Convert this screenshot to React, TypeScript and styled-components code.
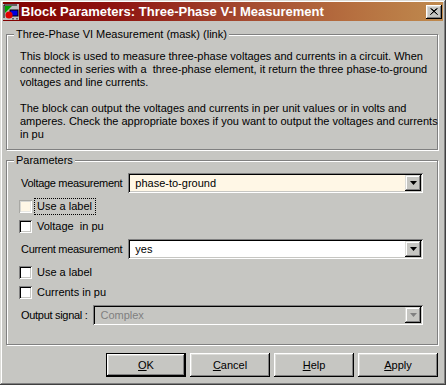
import React from 'react';
import styled, { createGlobalStyle } from 'styled-components';

// Styles

const GlobalStyle = createGlobalStyle`
    html, body {
        margin: 0;
        padding: 0;
        background: #c6c6c2;
    }
    body {
        font-family: "Liberation Sans", Arial, sans-serif;
        font-size: 11px;
        color: #000;
    }
`

const Window = styled.div`
    width: 446px;
    height: 385px;
    box-sizing: border-box;
    padding: 3px;
    background: #c6c6c2;
    box-shadow: inset -1px -1px 0 #404040, inset 1px 1px 0 #dcdcd8,
        inset -2px -2px 0 #808080, inset 2px 2px 0 #ffffff;
    display: flex;
    flex-direction: column;
`
const TitleBar = styled.div`
    height: 19px;
    margin-top: -1px;
    display: flex;
    align-items: center;
    padding-right: 1px;
    background: linear-gradient(to right, #800000 0%, #8e1410 25%, #a44a30 55%, #b67040 80%, #bf8a4e 100%);
`
const TitleText = styled.span`
    flex: 1;
    margin-left: 2px;
    color: #fff;
    font-weight: bold;
    font-size: 13px;
    white-space: nowrap;
`
const CloseButton = styled.div`
    width: 16px;
    height: 14px;
    box-sizing: border-box;
    background: #c6c6c2;
    display: flex;
    align-items: center;
    justify-content: center;
    box-shadow: inset -1px -1px 0 #000, inset 1px 1px 0 #fff,
        inset -2px -2px 0 #808080, inset 2px 2px 0 #dcdcd8;
`
const Body = styled.div`
    flex: 1;
    display: flex;
    flex-direction: column;
    padding: 7px 5px 0 3px;
`
const Group = styled.fieldset<{ $top: number; $padTop: number; $padBottom: number }>`
    margin: ${p => p.$top}px 0 0 0;
    padding: ${p => p.$padTop}px 14px ${p => p.$padBottom}px 12px;
    border: 1px solid #808080;
    box-shadow: inset 1px 1px 0 #fff, 1px 1px 0 #fff;
    min-width: 0;
`
const Legend = styled.legend`
    padding: 0 2px;
    margin-left: -5px;
    line-height: 13px;
    background: #c6c6c2;
    position: relative;
`
const Description = styled.div`
    padding-left: 1px;
    line-height: 13px;
`
const Line = styled.div`
    white-space: pre;
    height: 13px;
`
const Rows = styled.div`
    display: flex;
    flex-direction: column;
    gap: 6px;
`
const ComboRow = styled.div`
    display: flex;
    align-items: center;
    gap: 6px;
    height: 20px;
    padding-left: 2px;
`
const ComboLabel = styled.span`
    white-space: nowrap;
    letter-spacing: -0.3px;
`
const Combo = styled.div<{ $bg: string; $disabled?: boolean }>`
    flex: 1;
    height: 20px;
    box-sizing: border-box;
    display: flex;
    align-items: center;
    padding: 2px;
    background: ${p => p.$bg};
    color: ${p => p.$disabled ? '#808080' : '#000'};
    box-shadow: inset 1px 1px 0 #808080, inset -1px -1px 0 #fff,
        inset 2px 2px 0 #000, inset -2px -2px 0 #c6c6c2;
`
const ComboValue = styled.span`
    flex: 1;
    padding-left: 5px;
`
const ArrowButton = styled.div`
    width: 16px;
    height: 16px;
    box-sizing: border-box;
    background: #c6c6c2;
    display: flex;
    align-items: center;
    justify-content: center;
    box-shadow: inset -1px -1px 0 #000, inset 1px 1px 0 #dcdcd8,
        inset -2px -2px 0 #808080, inset 2px 2px 0 #fff;
`
const CheckRow = styled.label`
    display: flex;
    align-items: center;
    height: 14px;
    gap: 2px;
`
const CheckBox = styled.span<{ $bg: string; $soft?: boolean }>`
    width: 13px;
    height: 13px;
    box-sizing: border-box;
    background: ${p => p.$bg};
    box-shadow: ${p => p.$soft
        ? 'inset 1px 1px 0 #a8a8a4, inset -1px -1px 0 #fff, inset 2px 2px 0 #d8d8d4, inset -2px -2px 0 #e8e8e4'
        : 'inset 1px 1px 0 #808080, inset -1px -1px 0 #fff, inset 2px 2px 0 #000, inset -2px -2px 0 #c6c6c2'};
`
const CheckText = styled.span<{ $focused?: boolean }>`
    padding: 1px 3px 1px 2px;
    line-height: 13px;
    border: 1px dotted ${p => p.$focused ? '#000' : 'transparent'};
    white-space: pre;
`
const ButtonBar = styled.div`
    display: flex;
    justify-content: flex-end;
    gap: 4px;
    margin-top: 8px;
`
const Button = styled.button<{ $default?: boolean }>`
    width: 80px;
    height: 24px;
    box-sizing: border-box;
    border: ${p => p.$default ? '1px solid #000' : 'none'};
    padding: 0;
    background: #c6c6c2;
    font-family: "Liberation Sans", Arial, sans-serif;
    font-size: 11px;
    color: #000;
    box-shadow: inset -1px -1px 0 #000, inset 1px 1px 0 #fff,
        inset -2px -2px 0 #808080, inset 2px 2px 0 #dcdcd8;
`
const Key = styled.span`
    text-decoration: underline;
`

// Icons

const SimulinkIcon = () => (
    <svg width="16" height="16" viewBox="0 0 16 16">
        <rect x="0" y="0" width="16" height="16" fill="#c0c0c0" />
        <path d="M1 1h13M1 1v13" stroke="#000" strokeWidth="1" />
        <path d="M2 2l7 0l-7 7z" fill="#00a000" />
        <rect x="7" y="6" width="8" height="6" fill="#0000e0" stroke="#000" strokeWidth="1" />
        <circle cx="6" cy="11" r="3.6" fill="#e00000" />
        <path d="M10 14v1.5M14 14v1.5" stroke="#000" strokeWidth="1" />
    </svg>
)

const CloseGlyph = () => (
    <svg width="8" height="7" viewBox="0 0 8 7">
        <path d="M0.5 0.5l7 6M7.5 0.5l-7 6M1.5 0.5l6 6M6.5 0.5l-6 6" stroke="#000" strokeWidth="1" />
    </svg>
)

const DownArrow = ({ color }: { color: string }) => (
    <svg width="7" height="4" viewBox="0 0 7 4">
        <path d="M0 0h7l-3.5 4z" fill={color} />
    </svg>
)

// Data

const description = [
    'This block is used to measure three-phase voltages and currents in a circuit. When',
    'connected in series with a  three-phase element, it return the three phase-to-ground',
    'voltages and line currents.',
    '',
    'The block can output the voltages and currents in per unit values or in volts and',
    'amperes. Check the appropriate boxes if you want to output the voltages and currents',
    'in pu',
]

const ComboField = ({ label, value, bg, disabled }: { label: string; value: string; bg: string; disabled?: boolean }) => (
    <ComboRow>
        <ComboLabel>{label}</ComboLabel>
        <Combo $bg={bg} $disabled={disabled}>
            <ComboValue>{value}</ComboValue>
            <ArrowButton>
                <DownArrow color={disabled ? '#808080' : '#000'} />
            </ArrowButton>
        </Combo>
    </ComboRow>
)

const CheckField = ({ text, bg = '#fff', focused, soft }: { text: string; bg?: string; focused?: boolean; soft?: boolean }) => (
    <CheckRow>
        <CheckBox $bg={bg} $soft={soft} />
        <CheckText $focused={focused}>{text}</CheckText>
    </CheckRow>
)

const App = () => {
    return (
        <Window>
            <GlobalStyle />
            <TitleBar>
                <SimulinkIcon />
                <TitleText>Block Parameters: Three-Phase V-I Measurement</TitleText>
                <CloseButton>
                    <CloseGlyph />
                </CloseButton>
            </TitleBar>

            <Body>
                <Group $top={0} $padTop={9} $padBottom={8}>
                    <Legend>Three-Phase VI Measurement (mask) (link)</Legend>
                    <Description>
                        {description.map((line, i) => (
                            <Line key={i}>{line}</Line>
                        ))}
                    </Description>
                </Group>

                <Group $top={4} $padTop={6} $padBottom={19}>
                    <Legend>Parameters</Legend>
                    <Rows>
                        <ComboField label="Voltage measurement" value="phase-to-ground" bg="#fff7e6" />
                        <CheckField text="Use a label" bg="#fff7e6" focused soft />
                        <CheckField text="Voltage  in pu" />
                        <ComboField label="Current measurement" value="yes" bg="#fff" />
                        <CheckField text="Use a label" />
                        <CheckField text="Currents in pu" />
                        <ComboField label="Output signal :" value="Complex" bg="#c6c6c2" disabled />
                    </Rows>
                </Group>

                <ButtonBar>
                    <Button $default><Key>O</Key>K</Button>
                    <Button><Key>C</Key>ancel</Button>
                    <Button><Key>H</Key>elp</Button>
                    <Button><Key>A</Key>pply</Button>
                </ButtonBar>
            </Body>
        </Window>
    );
};

export default App;
